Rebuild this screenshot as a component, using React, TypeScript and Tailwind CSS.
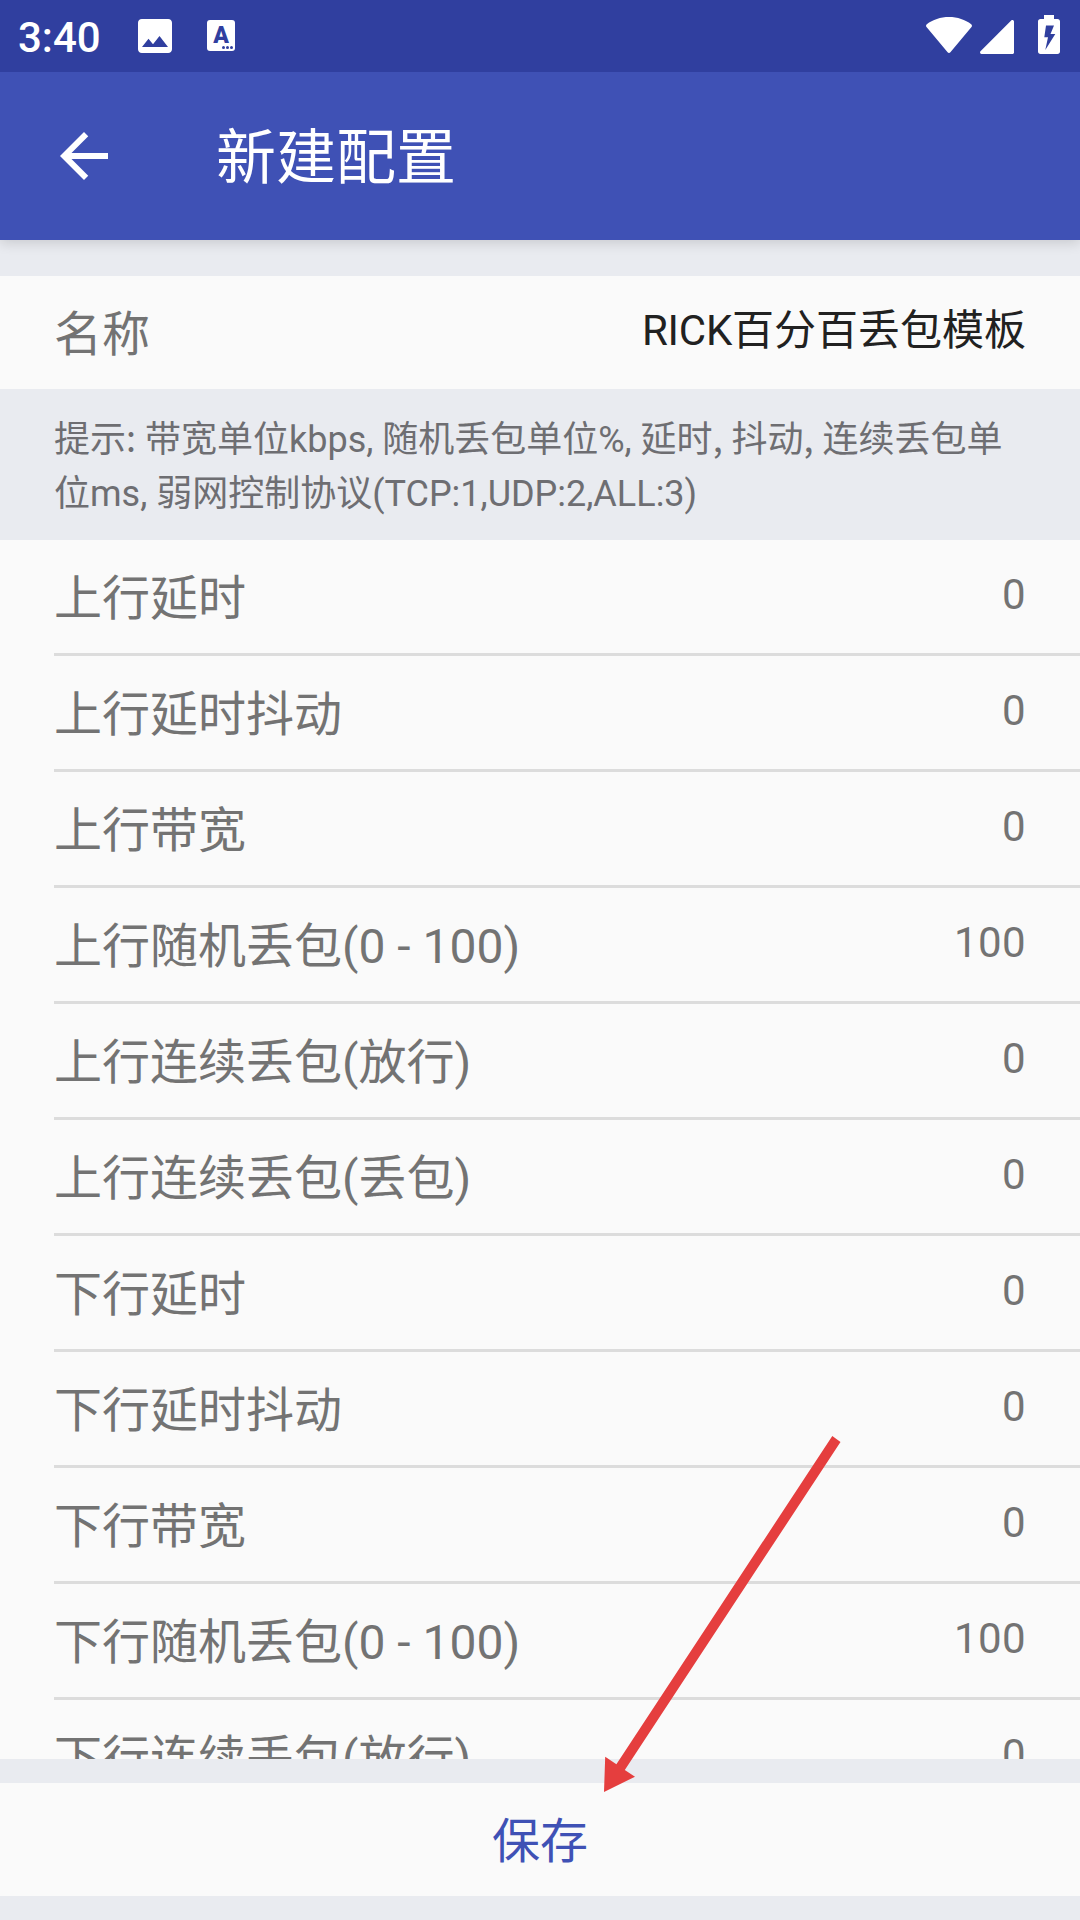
import React from 'react';

interface ConfigField {
  label: string;
  value: string;
}

const fields: ConfigField[] = [
  { label: '上行延时', value: '0' },
  { label: '上行延时抖动', value: '0' },
  { label: '上行带宽', value: '0' },
  { label: '上行随机丢包(0 - 100)', value: '100' },
  { label: '上行连续丢包(放行)', value: '0' },
  { label: '上行连续丢包(丢包)', value: '0' },
  { label: '下行延时', value: '0' },
  { label: '下行延时抖动', value: '0' },
  { label: '下行带宽', value: '0' },
  { label: '下行随机丢包(0 - 100)', value: '100' },
  { label: '下行连续丢包(放行)', value: '0' },
];

const StatusBar = () => (
  <div className="relative z-20 flex h-[72px] shrink-0 items-start bg-[#303f9f] text-white">
    <span className="ml-[18px] w-[120px] pt-[13px] text-[42px] leading-[49px] font-medium">3:40</span>
    <svg className="mt-[19px] h-[34px] w-[34px]" viewBox="0 0 34 34">
      <path
        fill="currentColor"
        fillRule="evenodd"
        d="M3.800 0H30.200C32.300 0 34 1.700 34 3.800V30.200C34 32.300 32.300 34 30.200 34H3.800C1.700 34 0 32.300 0 30.200V3.800C0 1.700 1.700 0 3.800 0ZM4 28H30L21.500 17L15 25.300L10.500 19.800Z"
      />
    </svg>
    <div className="relative mt-[20px] ml-[35px] h-[31px] w-[28px] rounded-[3px] bg-white text-[#303f9f]">
      <span className="absolute top-[5px] left-0 w-full text-center text-[23px] leading-[22px] font-black">A</span>
      <svg className="absolute right-[2px] bottom-[2px] h-[3px] w-[11px]" viewBox="0 0 11 3">
        <circle cx="1.5" cy="1.5" r="1.5" fill="currentColor" />
        <circle cx="5.5" cy="1.5" r="1.5" fill="currentColor" />
        <circle cx="9.5" cy="1.5" r="1.5" fill="currentColor" />
      </svg>
    </div>
    <div className="mr-[20px] ml-auto flex">
      <svg className="mt-[17px] h-[36px] w-[46px]" viewBox="0 0 46 36">
        <path
          fill="currentColor"
          d="M23 0C14.500 0 6.700 2.700 .8 7.200C-.1 7.900-.2 9.100.5 10L21.600 35.200C22.300 36.100 23.700 36.100 24.400 35.200L45.500 10C46.200 9.100 46.100 7.900 45.200 7.200C39.300 2.700 31.500 0 23 0Z"
        />
      </svg>
      <svg className="mt-[20px] ml-[8px] h-[34px] w-[34px]" viewBox="0 0 34 34">
        <path
          fill="currentColor"
          d="M31.200 .5L.5 31.200C-.5 32.200.2 34 1.500 34H32.500C33.300 34 34 33.300 34 32.500V1.500C34 .1 32.200-.5 31.200.5Z"
        />
      </svg>
      <svg className="mt-[15px] ml-[24px] h-[39px] w-[22px]" viewBox="0 0 22 39">
        <path
          fill="currentColor"
          fillRule="evenodd"
          d="M6 0H16V4H19.500C21 4 22 5 22 6.500V36.500C22 38 21 39 19.500 39H2.500C1 39 0 38 0 36.500V6.500C0 5 1 4 2.500 4H6ZM8 10.500L6.300 22.300H10L7.300 35L17.300 19H12.500L16 10.500Z"
        />
      </svg>
    </div>
  </div>
);

const AppBar = () => (
  <div className="relative z-10 flex h-[168px] shrink-0 items-center bg-[#3f51b5] text-white shadow-[0_3px_12px_rgba(0,0,0,0.14)]">
    <button className="ml-[48px]">
      <svg className="h-[72px] w-[72px]" viewBox="0 0 24 24" fill="currentColor">
        <path d="M20 11H7.830l5.590-5.590L12 4l-8 8 8 8 1.410-1.410L7.830 13H20v-2z" />
      </svg>
    </button>
    <h1 className="ml-[96px] pt-[5px] text-[60px] leading-[84px]">新建配置</h1>
  </div>
);

const FieldRow = ({ label, value }: ConfigField) => (
  <div className="ml-[54px] flex h-[116px] shrink-0 justify-between border-b-[3px] border-[#dcdcdc] pr-[54px] text-[#737373]">
    <span className="pt-[24px] text-[48px] leading-[70px]">{label}</span>
    <span className="pt-[25px] text-[42px] leading-[60px] tracking-[0.4px]">{value}</span>
  </div>
);

// Punctuation that follows a Chinese word takes the Chinese font's width
const Mark = ({ children }: { children: React.ReactNode }) => (
  <span className="font-['Noto_Sans_CJK_SC',sans-serif] leading-none">{children}</span>
);

// Pointer towards the save button
const Arrow = () => (
  <svg className="pointer-events-none absolute top-0 left-0 z-20" width="1080" height="1920" viewBox="0 0 1080 1920">
    <polygon
      fill="#e53e3e"
      points="832.3,1436 840.5,1442 624.8,1770 635,1776.7 604,1792 605.2,1756.7 616.4,1764.300"
    />
  </svg>
);

export default function App() {
  return (
    <div className="relative flex h-[1920px] w-[1080px] flex-col overflow-hidden bg-[#e9ebf0] font-[Roboto,'Noto_Sans_CJK_SC',sans-serif]">
      <StatusBar />
      <AppBar />

      <div className="mt-[36px] flex h-[113px] shrink-0 justify-between bg-[#fafafa] px-[54px]">
        <span className="pt-[24px] text-[48px] leading-[70px] text-[#737373]">名称</span>
        <span className="pt-[25px] text-[42px] leading-[60px] text-[#212121]">
          <span className="tracking-[-0.25px]">RICK</span>百分百丢包模板
        </span>
      </div>

      <p className="h-[151px] shrink-0 px-[54px] pt-[24px] text-[36px] leading-[54px] whitespace-nowrap text-[#6e6e72]">
        提示<Mark>:</Mark> 带宽单位kbps, 随机丢包单位%, 延时<Mark>,</Mark> 抖动<Mark>,</Mark> 连续丢包单
        <br />
        位ms, 弱网控制协议(TCP:1,UDP:2,ALL:3)
      </p>

      <div className="flex h-[1219px] shrink-0 flex-col overflow-hidden bg-[#fafafa]">
        {fields.map((field) => (
          <FieldRow key={field.label} label={field.label} value={field.value} />
        ))}
      </div>

      <button className="mt-[24px] h-[113px] shrink-0 bg-[#fafafa] pt-[4px] text-[48px] leading-[109px] text-[#3f51b5]">
        保存
      </button>

      <Arrow />
    </div>
  );
}
